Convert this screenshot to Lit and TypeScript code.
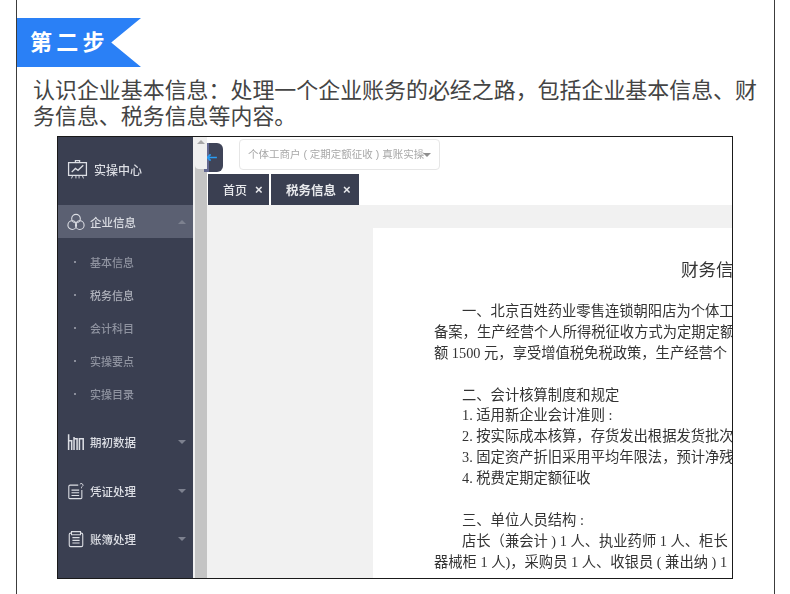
import { LitElement, html, css, svg } from "lit";
import { customElement } from "lit/decorators.js";

const icon = (body: unknown) => html`<svg class="ico" viewBox="0 0 20 20" fill="none" stroke="#dcdee4" stroke-width="1.2">${body}</svg>`;

const ICONS = {
  board: svg`<path d="M1.500 3.500h17v12h-17z"/><path d="M8 3.500V1.500h4v2"/><path d="M4.500 12.500l3.500-3.500 2.500 1.800L15.500 6" stroke-width="1.300"/><path d="M5.500 15.500l-1.200 3M8.500 15.500v3M11.500 15.500v3M14.500 15.500l1.200 3" stroke-width=".9"/>`,
  circles: svg`<circle cx="10" cy="6.300" r="4.800"/><circle cx="5.800" cy="13.500" r="4.800"/><circle cx="14.200" cy="13.500" r="4.800"/>`,
  bars: svg`<path d="M1.800 19V1.500M1.800 8.500h3.400V19M7.800 19V4.500M7.800 6.500h3.400V19M13.800 19V6.500h4.200V19" stroke-width="1.700"/>`,
  note: svg`<path d="M12.500 3.500H3.500a1.500 1.500 0 0 0-1.500 1.500v12.500a1 1 0 0 0 1 1h12.500a1 1 0 0 0 1-1V9"/><path d="M5 9h8.500M5 12h8.500M5 15h8.500"/><path d="M14.300 2.700a1.800 1.800 0 1 1 2.600 2.300l-.8.7v1.300" stroke-width="1"/>`,
  book: svg`<path d="M5 3.500H4a1.500 1.500 0 0 0-1.500 1.500v12a1.500 1.500 0 0 0 1.500 1.500h12a1.500 1.500 0 0 0 1.500-1.500V5A1.500 1.500 0 0 0 16 3.500h-1"/><path d="M5 1.800h10v3.400H5z"/><path d="M6 8.500h8M6 11.500h8M6 14.500h8"/>`,
};

const SUBS = [
  { t: "基本信息", on: false },
  { t: "税务信息", on: true },
  { t: "会计科目", on: false },
  { t: "实操要点", on: false },
  { t: "实操目录", on: false },
];

const INTRO = "认识企业基本信息\uFF1A处理一个企业账务的必经之路\uFF0C包括企业基本信息、财务信息、税务信息等内容。";

const DOC = [
  { t: "一、北京百姓药业零售连锁朝阳店为个体工", i: true },
  { t: "备案\uFF0C生产经营个人所得税征收方式为定期定额", i: false },
  { t: "额 1500 元\uFF0C享受增值税免税政策\uFF0C生产经营个", i: false },
  { t: "", i: false },
  { t: "二、会计核算制度和规定", i: true },
  { t: "1. 适用新企业会计准则 :", i: true },
  { t: "2. 按实际成本核算\uFF0C存货发出根据发货批次", i: true },
  { t: "3. 固定资产折旧采用平均年限法\uFF0C预计净残", i: true },
  { t: "4. 税费定期定额征收", i: true },
  { t: "", i: false },
  { t: "三、单位人员结构 :", i: true },
  { t: "店长\uFF08兼会计 ) 1 人、执业药师 1 人、柜长", i: true },
  { t: "器械柜 1 人)\uFF0C采购员 1 人、收银员 ( 兼出纳 ) 1", i: false },
];

@customElement("app-root")
export class AppRoot extends LitElement {
  static styles = css`
    :host { display: block; width: 790px; height: 594px; overflow: hidden; background: #fff;
      font-family: "Liberation Sans", "Noto Sans CJK SC", sans-serif; }
    .page { box-sizing: border-box; width: 759px; height: 594px; margin-left: 16px; padding-top: 18px;
      border-left: 1px solid #3c3c3c; border-right: 1px solid #3c3c3c; }
    .banner { width: 124px; height: 49px; background: #2a80f6; box-sizing: border-box; padding-left: 13px;
      clip-path: polygon(0 0, 100% 0, 76% 50%, 100% 100%, 0 100%);
      color: #fff; font-size: 22px; font-weight: 700; line-height: 49px; letter-spacing: 4.300px; white-space: nowrap; }
    .intro { margin: 11px 0 0 16px; width: 730px; font-size: 21.950px; line-height: 26px; color: #444; }
    .frame { box-sizing: border-box; width: 676px; height: 443px; margin: 6px 0 0 40px; border: 1px solid #1a1a1a;
      display: flex; overflow: hidden; }
    .inner { display: flex; flex: 1; min-width: 0; filter: blur(.35px); }
    .side { width: 135px; flex: none; background: #3a3f51; color: #dcdee4; font-size: 11.500px; display: flex; flex-direction: column; }
    .brand { height: 68px; display: flex; align-items: center; padding: 0 0 3px 9px; box-sizing: border-box; gap: 6px; font-size: 12px; font-weight: 500; }
    .brand .ico { width: 21px; height: 21px; }
    .row { display: flex; align-items: center; padding-left: 9px; gap: 5px; position: relative; font-weight: 500; }
    .row.open { height: 33px; background: #5b6072; }
    .row.group { height: 48.500px; }
    .row .ico { width: 18px; height: 18px; }
    .caret { position: absolute; right: 7px; top: 50%; margin-top: -2px; width: 0; height: 0;
      border-left: 4.500px solid transparent; border-right: 4.500px solid transparent; border-top: 4px solid #7d818f; }
    .caret.up { border-top: 0; border-bottom: 4px solid #7d818f; }
    .subs { padding: 7px 0 8px; }
    .sub { height: 33px; display: flex; align-items: center; padding-left: 16px; gap: 14px; color: #8f93a0; font-size: 11px; font-weight: 500; }
    .sub.on { color: #adb0ba; }
    .sub i { width: 2px; height: 2px; background: #8a8e9b; display: block; }
    .track { width: 14px; flex: none; display: flex; flex-direction: column; background: #c4c4c4; border-left: 2px solid #f0f0f0; box-sizing: border-box; }
    .track .cap { height: 32px; background: #efefef; position: relative; border-radius: 0 0 0 4px; }
    .track .cap::after { content: ""; position: absolute; left: 2px; top: 3px; border-left: 4px solid transparent; border-right: 4px solid transparent; border-bottom: 4px solid #a8a8a8; }
    .main { flex: 1; min-width: 0; display: flex; flex-direction: column; background: #fff; }
    .top { height: 37px; flex: none; display: flex; align-items: flex-start; padding-top: 2px; box-sizing: border-box; }
    .toggle { width: 19px; height: 29px; margin: 4px 0 0 -3px; border-radius: 0 6px 6px 0;
      background: linear-gradient(90deg, #636890 5px, #3f4458 5px); display: flex; align-items: center; padding-left: 2px; box-sizing: border-box; }
    .toggle svg { width: 11px; height: 9px; }
    .select { box-sizing: border-box; width: 201px; height: 31px; margin-left: 16px; border: 1px solid #e6e6e6; border-radius: 4px;
      color: #a8a8a8; font-size: 10.500px; line-height: 29px; padding-left: 8px; position: relative; white-space: nowrap; overflow: hidden; }
    .select::after { content: ""; position: absolute; left: 183px; top: 13px; border-left: 4px solid transparent; border-right: 4px solid transparent; border-top: 4px solid #8e8e8e; }
    .tabs { height: 31px; flex: none; display: flex; gap: 2px; padding-left: 1px; }
    .tab { background: #3a3f51; color: #e8e9ec; font-size: 12px; font-weight: 500; display: flex; align-items: center; box-sizing: border-box; white-space: nowrap; }
    .tab.a { width: 61px; padding-left: 15px; gap: 8px; }
    .tab.b { width: 88px; padding-left: 15px; gap: 7px; font-size: 12.500px; font-weight: 700; }
    .tab span { font-size: 13px; font-weight: 700; line-height: 1; }
    .body { flex: 1; background: #f1f1f1; padding: 23px 0 0 166px; min-height: 0; min-width: 0; }
    .doc { background: #fff; height: 100%; padding-top: 22px; overflow: hidden; color: #333;
      font-family: "Liberation Serif", "Noto Sans CJK SC", serif; font-size: 14.300px; line-height: 20.900px; }
    .title { font-size: 17.500px; line-height: 40px; padding-left: 308px; white-space: nowrap; margin-bottom: 11px; }
    .line { white-space: nowrap; padding-left: 61px; height: 20.900px; }
    .line.ind { padding-left: 89px; }
  `;

  render() {
    return html`<div class="page">
      <div class="banner">第二步</div>
      <div class="intro">${INTRO}</div>
      <div class="frame"><div class="inner">
        <div class="side">
          <div class="brand">${icon(ICONS.board)}<span>实操中心</span></div>
          <div class="row open">${icon(ICONS.circles)}<span>企业信息</span><b class="caret up"></b></div>
          <div class="subs">
            ${SUBS.map((s) => html`<div class="sub ${s.on ? "on" : ""}"><i></i><span>${s.t}</span></div>`)}
          </div>
          <div class="row group">${icon(ICONS.bars)}<span>期初数据</span><b class="caret"></b></div>
          <div class="row group">${icon(ICONS.note)}<span>凭证处理</span><b class="caret"></b></div>
          <div class="row group">${icon(ICONS.book)}<span>账簿处理</span><b class="caret"></b></div>
        </div>
        <div class="track"><div class="cap"></div></div>
        <div class="main">
          <div class="top">
            <div class="toggle"><svg viewBox="0 0 12 10" fill="none" stroke="#2a9df4" stroke-width="1.800"><path d="M12 5H1.500M5 1.500L1.500 5 5 8.500"/></svg></div>
            <div class="select">个体工商户 ( 定期定额征收 ) 真账实操</div>
          </div>
          <div class="tabs">
            <div class="tab a">首页<span>×</span></div>
            <div class="tab b">税务信息<span>×</span></div>
          </div>
          <div class="body">
            <div class="doc">
              <div class="title">财务信</div>
              ${DOC.map((l) => html`<div class="line ${l.i ? "ind" : ""}">${l.t}</div>`)}
            </div>
          </div>
        </div>
      </div></div>
    </div>`;
  }
}
